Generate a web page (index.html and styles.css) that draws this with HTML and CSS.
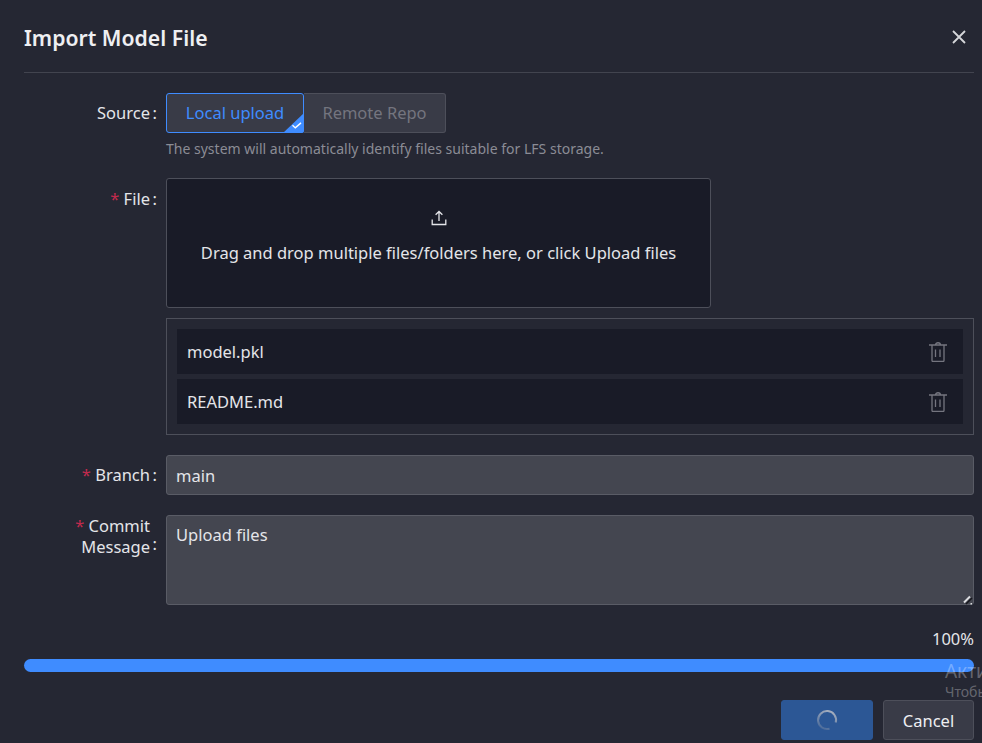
FILE: index.html
```html
<!DOCTYPE html>
<html lang="en">
<head>
  <meta charset="UTF-8" />
  <title>Import Model File</title>
  <link rel="stylesheet" href="styles.css">
</head>
<body>
  <div class="dialog">
    <div class="dialog-header">
      <h1>Import Model File</h1>
      <svg class="close" width="14" height="14" viewBox="0 0 14 14"><path d="M1 1l12 12M13 1L1 13" stroke="#d5d6da" stroke-width="1.8" fill="none"/></svg>
    </div>

    <div class="row row-source">
      <label class="label"><span>Source</span></label>
      <div class="control">
        <div class="radio-group">
          <div class="radio active">Local upload
            <svg class="radio-check" width="21" height="20" viewBox="0 0 21 20"><path d="M21 0v18a2 2 0 0 1-2 2H0z" fill="#3f8cff"/><path d="M9.500 12.300l2.800 2.600 5.700-5" stroke="#fff" stroke-width="1.400" fill="none"/></svg>
          </div>
          <div class="radio">Remote Repo</div>
        </div>
        <p class="hint">The system will automatically identify files suitable for LFS storage.</p>
      </div>
    </div>

    <div class="row row-file">
      <label class="label"><span><i>*</i> File</span></label>
      <div class="control">
        <div class="dropzone">
          <svg class="upload-icon" width="16" height="16" viewBox="0 0 16 16"><path d="M8 11V1.500M4.600 4.800L8 1.500l3.400 3.300M1.200 9.500v5h13.600v-5" stroke="#e4e5e9" stroke-width="1.300" fill="none"/></svg>
          <div>Drag and drop multiple files/folders here, or click Upload files</div>
        </div>
        <div class="file-list">
          <div class="file-item">model.pkl
            <svg class="trash" width="18" height="20" viewBox="0 0 18 20"><path d="M0 3h18M6.500 3c0-3 5-3 5 0M3 3.500V18.500a1 1 0 0 0 1 1h10a1 1 0 0 0 1-1V3.500M6.500 7.500v7.500M11 7.500v7.500" stroke="#74757f" stroke-width="1.300" fill="none"/></svg>
          </div>
          <div class="file-item">README.md
            <svg class="trash" width="18" height="20" viewBox="0 0 18 20"><path d="M0 3h18M6.500 3c0-3 5-3 5 0M3 3.500V18.500a1 1 0 0 0 1 1h10a1 1 0 0 0 1-1V3.500M6.500 7.500v7.500M11 7.500v7.500" stroke="#74757f" stroke-width="1.300" fill="none"/></svg>
          </div>
        </div>
      </div>
    </div>

    <div class="row row-branch">
      <label class="label"><span><i>*</i> Branch</span></label>
      <div class="control">
        <input class="input" type="text" value="main" />
      </div>
    </div>

    <div class="row row-message">
      <label class="label label-wrap"><span><i>*</i> Commit<br>Message</span></label>
      <div class="control textarea-wrap">
        <textarea class="input textarea">Upload files</textarea>
        <svg class="grip" width="10" height="10" viewBox="0 0 10 10"><path d="M3 9l6-6" stroke="#16171d" stroke-width="1.500" fill="none"/><path d="M1 7.500L7 1.500" stroke="#dcdde0" stroke-width="2" fill="none"/><path d="M7.500 8h1.500v1.500h-1.500z" fill="#dcdde0"/></svg>
      </div>
    </div>

    <div class="progress">
      <div class="progress-text">100%</div>
      <div class="progress-bar"></div>
    </div>

    <div class="dialog-footer">
      <button class="btn btn-primary">
        <svg class="spinner" width="22" height="22" viewBox="0 0 22 22">
          <defs>
            <linearGradient id="spin" x1="0.800" y1="0" x2="0.400" y2="1">
              <stop offset="0" stop-color="#a9b1c0"/>
              <stop offset="1" stop-color="#4f6e9c"/>
            </linearGradient>
          </defs>
          <path d="M19.700 13.500A9 9 0 1 0 13.500 19.700" stroke="url(#spin)" stroke-width="2" fill="none"/>
        </svg>
      </button>
      <button class="btn">Cancel</button>
    </div>
  </div>

  <div class="watermark">
    <div class="wm-big">Акти</div>
    <div class="wm-small">Чтобы</div>
  </div>
</body>
</html>
```

FILE: styles.css
```css
html, body { margin: 0; height: 743px; overflow: hidden; }
body { background: #252733; color: #e4e5e9; font-family: "Noto Sans", "Open Sans", sans-serif; font-size: 16.5px; position: relative; }

.dialog { padding: 0 8px 0 24px; }
.dialog-header { height: 72px; display: flex; justify-content: space-between; align-items: center; border-bottom: 1px solid #42444f; }
.dialog-header h1 { margin: 0 0 -2px; font-size: 21.2px; font-weight: 600; color: #eeeff2; }
.close { margin: 2px 8px 0 0; }

.row { display: flex; }
.row-source { margin-top: 20px; }
.row-file { margin-top: 19px; }
.row-branch { margin-top: 20px; }
.row-message { margin-top: 20px; }

.label { box-sizing: border-box; width: 142px; flex: none; display: flex; justify-content: flex-end; height: 40px; line-height: 40px; padding-right: 16px; text-align: right; position: relative; color: #e4e5e9; }
.label::after { content: ":"; position: absolute; right: 9px; }
.label i { color: #c22a4d; font-style: normal; }
.label-wrap { line-height: 21px; height: 44px; }
.label-wrap::after { top: 9px; line-height: 40px; }
.row-file .label { line-height: 41px; }
.control { flex: 1; }

.radio-group { display: flex; height: 40px; }
.radio { box-sizing: border-box; width: 142px; height: 40px; line-height: 38px; text-align: center; background: #393b47; border: 1px solid #4d4f5a; border-left: 0; border-radius: 0 3px 3px 0; color: #74757f; position: relative; }
.radio.active { width: 138px; border: 1px solid #3f8cff; color: #3f8cff; border-radius: 3px; }
.radio-check { position: absolute; right: -1px; bottom: -1px; }
.hint { margin: 6px 0 0; font-size: 14.03px; line-height: 20px; color: #8b8c95; }

.dropzone { box-sizing: border-box; width: 545px; height: 130px; background: #191b27; border: 1px solid #4d4f5a; border-radius: 3px; text-align: center; padding-top: 31px; }
.upload-icon { display: block; margin: 0 auto 15px; }
.file-list { box-sizing: border-box; margin-top: 10px; height: 117px; border: 1px solid #4d4f5a; padding: 10px; display: flex; flex-direction: column; gap: 5px; }
.file-item { height: 45px; line-height: 45px; background: #191b27; padding: 0 16px 0 10px; display: flex; justify-content: space-between; align-items: center; }

.input { box-sizing: border-box; display: block; width: 100%; height: 40px; background: #444650; border: 1px solid #5a5c66; border-radius: 3px; color: #e4e5e9; font: inherit; padding: 0 9px; outline: none; }
.textarea { height: 90px; padding: 7px 9px; line-height: 24px; resize: none; }
.textarea-wrap { position: relative; }
.grip { position: absolute; right: 1px; bottom: 0; }

.progress { margin-top: 23px; }
.progress-text { text-align: right; line-height: 22px; }
.progress-bar { height: 13px; margin-top: 9px; background: #3f8cff; border-radius: 7px; }

.dialog-footer { display: flex; justify-content: flex-end; gap: 10px; margin-top: 28px; }
.btn { box-sizing: border-box; width: 91px; height: 40px; background: #393b47; border: 1px solid #4d4f5a; border-radius: 3px; color: #eeeff2; font: inherit; padding: 0; }
.btn-primary { width: 92px; background: #2c5795; border-color: #2c5795; display: flex; align-items: center; justify-content: center; }

.watermark { position: absolute; left: 945px; top: 659px; white-space: nowrap; color: rgba(255,255,255,0.3); }
.wm-big { font-size: 19px; line-height: 24px; }
.wm-small { font-size: 14px; line-height: 18px; }
```
